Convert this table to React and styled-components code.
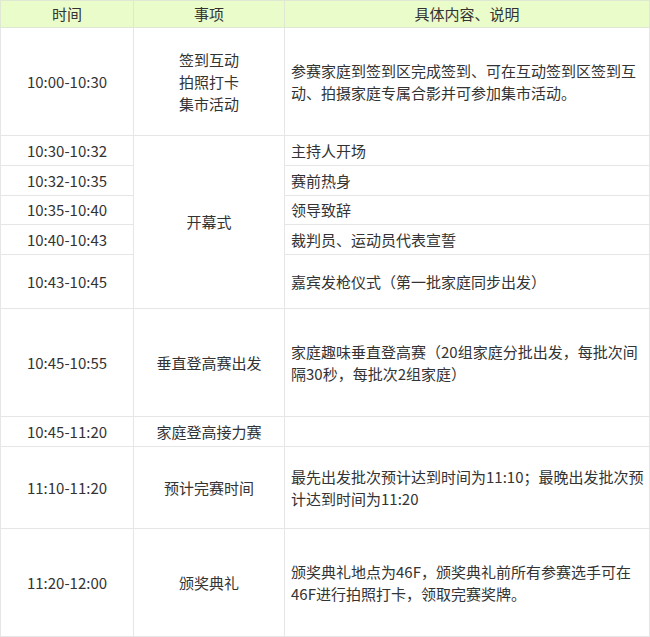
import React from "react";
import styled, { createGlobalStyle } from "styled-components";

const GlobalStyle = createGlobalStyle`
  html, body {
    margin: 0;
    padding: 0;
    background: #ffffff;
  }
  body {
    font-family: "Noto Sans CJK SC", "Noto Sans", sans-serif;
    color: #333333;
  }
`;

const schedule = [
  {
    time: "10:00-10:30",
    item: ["签到互动", "拍照打卡", "集市活动"],
    desc: "参赛家庭到签到区完成签到、可在互动签到区签到互动、拍摄家庭专属合影并可参加集市活动。",
    height: 108,
  },
  {
    time: "10:30-10:32",
    item: ["开幕式"],
    span: 5,
    desc: "主持人开场",
    height: 30,
  },
  { time: "10:32-10:35", desc: "赛前热身", height: 30 },
  { time: "10:35-10:40", desc: "领导致辞", height: 29 },
  { time: "10:40-10:43", desc: "裁判员、运动员代表宣誓", height: 30 },
  { time: "10:43-10:45", desc: "嘉宾发枪仪式（第一批家庭同步出发）", height: 54 },
  {
    time: "10:45-10:55",
    item: ["垂直登高赛出发"],
    desc: "家庭趣味垂直登高赛（20组家庭分批出发，每批次间隔30秒，每批次2组家庭）",
    height: 108,
  },
  { time: "10:45-11:20", item: ["家庭登高接力赛"], desc: "", height: 30 },
  {
    time: "11:10-11:20",
    item: ["预计完赛时间"],
    desc: "最先出发批次预计达到时间为11:10；最晚出发批次预计达到时间为11:20",
    height: 82,
  },
  {
    time: "11:20-12:00",
    item: ["颁奖典礼"],
    desc: "颁奖典礼地点为46F，颁奖典礼前所有参赛选手可在46F进行拍照打卡，领取完赛奖牌。",
    height: 108,
  },
];

function App() {
  return (
    <>
      <GlobalStyle />
      <Table>
        <colgroup>
          <col style={{ width: 133 }} />
          <col style={{ width: 151 }} />
          <col style={{ width: 365 }} />
        </colgroup>
        <thead>
          <tr>
            <HeadCell>时间</HeadCell>
            <HeadCell>事项</HeadCell>
            <HeadCell>具体内容、说明</HeadCell>
          </tr>
        </thead>
        <tbody>
          {schedule.map((row, i) => (
            <Row key={i} $h={row.height}>
              <Cell>{row.time}</Cell>
              {row.item && (
                <Cell rowSpan={row.span || 1}>
                  {row.item.map((line) => (
                    <div key={line}>{line}</div>
                  ))}
                </Cell>
              )}
              <DescCell>{row.desc}</DescCell>
            </Row>
          ))}
        </tbody>
      </Table>
    </>
  );
}

const Table = styled.table`
  width: 649px;
  table-layout: fixed;
  border-collapse: collapse;
  font-size: 15px;
  line-height: 22px;
  color: #333333;
  text-spacing-trim: space-all;
`;

const HeadCell = styled.th`
  height: 26px;
  padding: 0;
  font-weight: 400;
  text-align: center;
  vertical-align: middle;
  background: #e9fcc9;
  border: 1px solid #dfe8d2;
`;

const Row = styled.tr`
  height: ${(p) => p.$h}px;
`;

const Cell = styled.td`
  padding: 0 4px;
  text-align: center;
  vertical-align: middle;
  border: 1px solid #e6e6e6;
`;

const DescCell = styled(Cell)`
  padding: 0 4px 0 6px;
  text-align: left;
`;

export default App;
